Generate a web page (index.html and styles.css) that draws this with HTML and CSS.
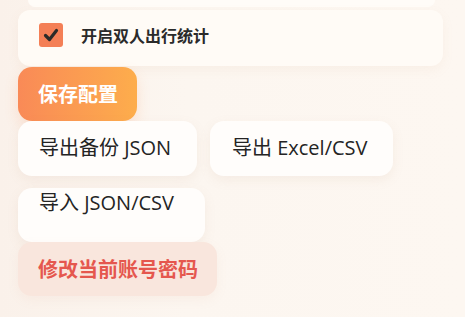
FILE: index.html
```html
<!DOCTYPE html>
<html lang="zh-CN">
<head>
<meta charset="utf-8">
<link rel="stylesheet" href="styles.css">
</head>
<body>
<div class="page">
  <div class="stub"></div>
  <div class="card">
    <label class="check">
      <span class="box">
        <svg viewBox="0 0 24 24" width="24" height="24"><path d="M6.5 12.5 L10.5 16.5 L17.5 7.5" fill="none" stroke="#2b2a28" stroke-width="3.2" stroke-linecap="round" stroke-linejoin="round"/></svg>
      </span>
      <span class="check-text">开启双人出行统计</span>
    </label>
  </div>
  <div class="actions">
    <button class="btn primary">保存配置</button>
    <div class="row">
      <button class="btn plain w-json">导出备份 JSON</button>
      <button class="btn plain w-excel">导出 Excel/CSV</button>
    </div>
    <div class="row">
      <label class="btn plain import">导入 JSON/CSV</label>
    </div>
    <div class="row">
      <button class="btn danger">修改当前账号密码</button>
    </div>
  </div>
</div>
</body>
</html>
```
FILE: styles.css
```css
* { box-sizing: border-box; }
html, body {
  margin: 0;
  padding: 0;
  background: #fbf4ee;
}
body {
  font-family: "Open Sans", "Noto Sans CJK SC", sans-serif;
  color: #232323;
  width: 465px;
  height: 317px;
  overflow: hidden;
}
.page {
  padding: 0 22px 0 18px;
  background: linear-gradient(90deg, #faf1ea 0%, #fcf6f0 40%, #fdf7f1 100%);
  height: 317px;
}
.stub {
  height: 7px;
  margin: 0 8px 0 10px;
  background: #fffcf8;
  border-radius: 0 0 12px 12px;
}
.card {
  margin-top: 3px;
  height: 56px;
  background: #fffbf6;
  border-radius: 12px;
  box-shadow: 0 4px 12px rgba(200, 150, 110, 0.08);
  display: flex;
  align-items: center;
  padding: 0 20px 6px 21px;
}
.check {
  display: flex;
  align-items: center;
  gap: 18px;
}
.box {
  width: 24px;
  height: 24px;
  border-radius: 3px;
  background: #f47f56;
  display: flex;
}
.check-text {
  font-family: "Noto Sans CJK SC", sans-serif;
  font-size: 16px;
  font-weight: 700;
  color: #2a2a2a;
  line-height: 24px;
}
.actions {
  display: flex;
  flex-direction: column;
  align-items: flex-start;
  padding-top: 1px;
}
.row {
  display: flex;
  gap: 13px;
}
.btn {
  font-family: "Open Sans", "Noto Sans CJK SC", sans-serif;
  font-size: 20px;
  line-height: 30px;
  border: none;
  border-radius: 14px;
  padding: 12px 20px;
  margin: 0;
  white-space: nowrap;
  display: block;
  text-align: left;
}
.primary {
  height: 54px;
  width: 119px;
  padding: 12px 19px 12px 20px;
  font-family: "Noto Sans CJK SC", sans-serif;
  font-weight: 700;
  color: #fff;
  background: linear-gradient(90deg, #f98a57 0%, #fdad4c 100%);
  box-shadow: 0 6px 14px rgba(249, 140, 80, 0.18);
}
.plain {
  height: 55px;
  padding: 12px 0 13px 21px;
  background: #fffdfb;
  color: #242424;
  box-shadow: 0 4px 12px rgba(190, 150, 120, 0.10);
}
.w-json { width: 179px; }
.w-excel { width: 183px; padding-left: 22px; }
.import {
  margin-top: 12px;
  width: 187px;
  height: 54px;
  padding: 0 0 24px 21px;
}
.danger {
  height: 54px;
  width: 199px;
  padding: 12px 20px;
  font-family: "Noto Sans CJK SC", sans-serif;
  font-weight: 700;
  color: #e5574e;
  background: #f9e6dd;
  box-shadow: 0 4px 12px rgba(220, 150, 130, 0.08);
}
```
